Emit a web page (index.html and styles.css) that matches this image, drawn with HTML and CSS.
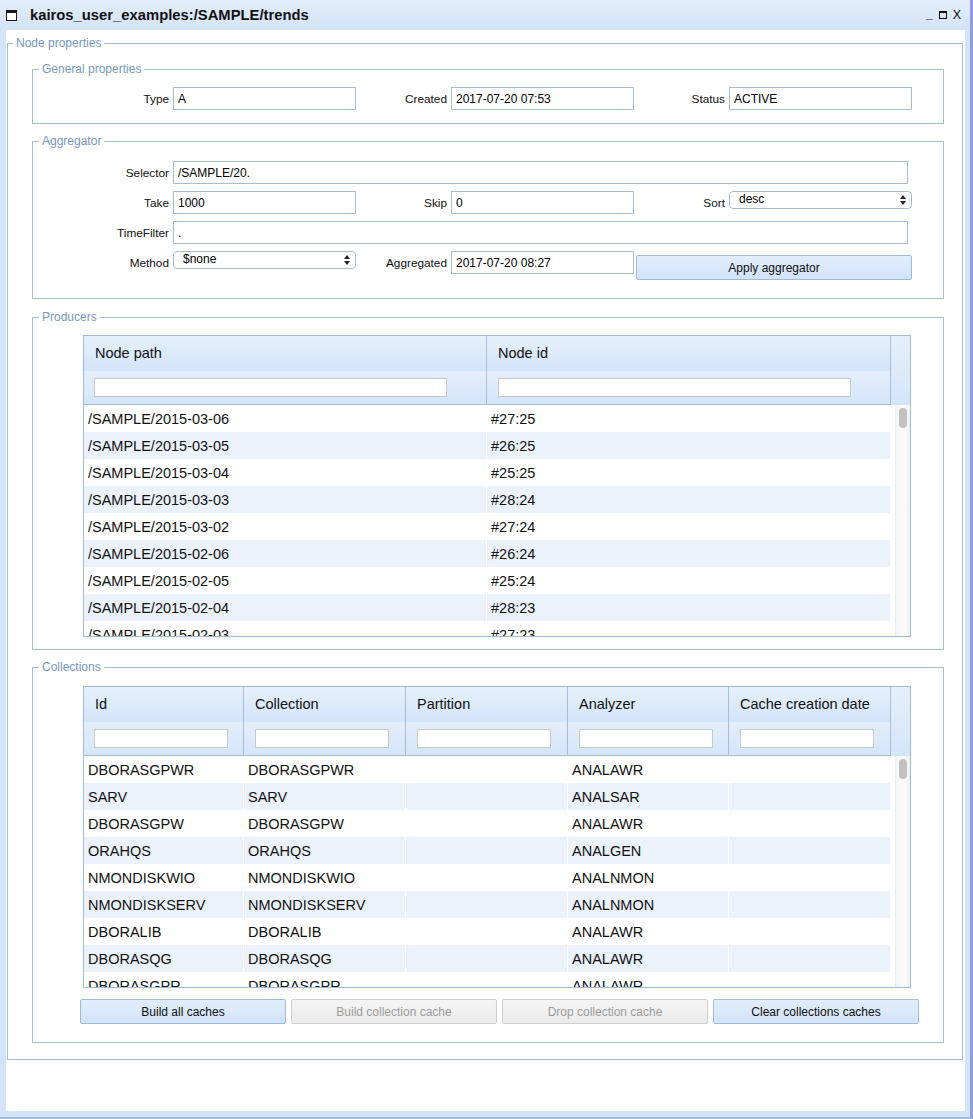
FILE: index.html
```html
<!DOCTYPE html>
<html>
<head>
<meta charset="utf-8">
<title>kairos_user_examples:/SAMPLE/trends</title>
<link rel="stylesheet" href="styles.css">
</head>
<body>
<div class="window">
  <div class="titlebar">
    <svg class="ticon" width="11" height="11" viewBox="0 0 11 11"><rect x="0.5" y="0.5" width="10" height="10" fill="#fff" stroke="#1a1a1a"/><rect x="0" y="0" width="11" height="3" fill="#1a1a1a"/></svg>
    <span class="title">kairos_user_examples:/SAMPLE/trends</span>
    <div class="controls">
      <span class="ctl-min">_</span>
      <span class="ctl-max"></span>
      <span class="ctl-close">X</span>
    </div>
  </div>
  <div class="client">
    <fieldset class="fs node">
      <legend>Node properties</legend>

      <fieldset class="fs sub general">
        <legend>General properties</legend>
        <div class="form general-form">
          <div class="lbl">Type</div><div class="inp">A</div>
          <div class="lbl">Created</div><div class="inp">2017-07-20 07:53</div>
          <div class="lbl">Status</div><div class="inp">ACTIVE</div>
        </div>
      </fieldset>

      <fieldset class="fs sub aggregator">
        <legend>Aggregator</legend>
        <div class="form agg-form">
          <div class="lbl">Selector</div><div class="inp wide">/SAMPLE/20.</div>
          <div class="lbl">Take</div><div class="inp">1000</div>
          <div class="lbl">Skip</div><div class="inp">0</div>
          <div class="lbl">Sort</div><div class="sel"><span>desc</span><svg width="6" height="10" viewBox="0 0 6 10"><path d="M3 0 L6 4 L0 4 Z M0 6 L6 6 L3 10 Z" fill="#222"/></svg></div>
          <div class="lbl">TimeFilter</div><div class="inp wide">.</div>
          <div class="lbl">Method</div><div class="sel"><span>$none</span><svg width="6" height="10" viewBox="0 0 6 10"><path d="M3 0 L6 4 L0 4 Z M0 6 L6 6 L3 10 Z" fill="#222"/></svg></div>
          <div class="lbl">Aggregated</div><div class="inp">2017-07-20 08:27</div>
          <div class="btn apply">Apply aggregator</div>
        </div>
      </fieldset>

      <fieldset class="fs sub producers">
        <legend>Producers</legend>
        <div class="table prod">
          <div class="thead">
            <div class="hrow">
              <div class="hcell">Node path</div>
              <div class="hcell">Node id</div>
            </div>
            <div class="frow">
              <div class="fcell"><div class="finp"></div></div>
              <div class="fcell"><div class="finp"></div></div>
            </div>
          </div>
          <div class="hscroll"></div>
          <div class="rows">
            <div class="row"><div class="cell">/SAMPLE/2015-03-06</div><div class="cell">#27:25</div></div>
            <div class="row alt"><div class="cell">/SAMPLE/2015-03-05</div><div class="cell">#26:25</div></div>
            <div class="row"><div class="cell">/SAMPLE/2015-03-04</div><div class="cell">#25:25</div></div>
            <div class="row alt"><div class="cell">/SAMPLE/2015-03-03</div><div class="cell">#28:24</div></div>
            <div class="row"><div class="cell">/SAMPLE/2015-03-02</div><div class="cell">#27:24</div></div>
            <div class="row alt"><div class="cell">/SAMPLE/2015-02-06</div><div class="cell">#26:24</div></div>
            <div class="row"><div class="cell">/SAMPLE/2015-02-05</div><div class="cell">#25:24</div></div>
            <div class="row alt"><div class="cell">/SAMPLE/2015-02-04</div><div class="cell">#28:23</div></div>
            <div class="row"><div class="cell">/SAMPLE/2015-02-03</div><div class="cell">#27:23</div></div>
          </div>
          <div class="vscroll"><div class="track"><div class="thumb"></div></div></div>
        </div>
      </fieldset>

      <fieldset class="fs sub collections">
        <legend>Collections</legend>
        <div class="table coll">
          <div class="thead">
            <div class="hrow">
              <div class="hcell">Id</div>
              <div class="hcell">Collection</div>
              <div class="hcell">Partition</div>
              <div class="hcell">Analyzer</div>
              <div class="hcell">Cache creation date</div>
            </div>
            <div class="frow">
              <div class="fcell"><div class="finp"></div></div>
              <div class="fcell"><div class="finp"></div></div>
              <div class="fcell"><div class="finp"></div></div>
              <div class="fcell"><div class="finp"></div></div>
              <div class="fcell"><div class="finp"></div></div>
            </div>
          </div>
          <div class="hscroll"></div>
          <div class="rows">
            <div class="row"><div class="cell">DBORASGPWR</div><div class="cell">DBORASGPWR</div><div class="cell"></div><div class="cell">ANALAWR</div><div class="cell"></div></div>
            <div class="row alt"><div class="cell">SARV</div><div class="cell">SARV</div><div class="cell"></div><div class="cell">ANALSAR</div><div class="cell"></div></div>
            <div class="row"><div class="cell">DBORASGPW</div><div class="cell">DBORASGPW</div><div class="cell"></div><div class="cell">ANALAWR</div><div class="cell"></div></div>
            <div class="row alt"><div class="cell">ORAHQS</div><div class="cell">ORAHQS</div><div class="cell"></div><div class="cell">ANALGEN</div><div class="cell"></div></div>
            <div class="row"><div class="cell">NMONDISKWIO</div><div class="cell">NMONDISKWIO</div><div class="cell"></div><div class="cell">ANALNMON</div><div class="cell"></div></div>
            <div class="row alt"><div class="cell">NMONDISKSERV</div><div class="cell">NMONDISKSERV</div><div class="cell"></div><div class="cell">ANALNMON</div><div class="cell"></div></div>
            <div class="row"><div class="cell">DBORALIB</div><div class="cell">DBORALIB</div><div class="cell"></div><div class="cell">ANALAWR</div><div class="cell"></div></div>
            <div class="row alt"><div class="cell">DBORASQG</div><div class="cell">DBORASQG</div><div class="cell"></div><div class="cell">ANALAWR</div><div class="cell"></div></div>
            <div class="row"><div class="cell">DBORASGPR</div><div class="cell">DBORASGPR</div><div class="cell"></div><div class="cell">ANALAWR</div><div class="cell"></div></div>
          </div>
          <div class="vscroll"><div class="track"><div class="thumb"></div></div></div>
        </div>
        <div class="btnrow">
          <div class="btn">Build all caches</div>
          <div class="btn disabled">Build collection cache</div>
          <div class="btn disabled">Drop collection cache</div>
          <div class="btn">Clear collections caches</div>
        </div>
      </fieldset>
    </fieldset>
  </div>
</div>
</body>
</html>
```

FILE: styles.css
```css
* { box-sizing: border-box; }
html, body { margin: 0; padding: 0; }
body {
  width: 973px;
  height: 1119px;
  overflow: hidden;
  background: #ffffff;
  font-family: "Liberation Sans", Arial, sans-serif;
  color: #000;
}

.window {
  width: 973px;
  height: 1119px;
  display: flex;
  flex-direction: column;
  background: #d4e4f8;
  padding: 0 0 6px 6px;
  border-right: 3px solid #8e9be0;
  border-bottom: 2px solid #a7bdd8;
}

.titlebar {
  height: 30px;
  flex: 0 0 30px;
  display: flex;
  align-items: center;
  margin-left: -6px;
  padding-left: 6px;
  background: linear-gradient(#e2edfb, #d3e3f7);
}
.ticon { display: block; margin-right: 13px; }
.title {
  font-weight: bold;
  font-size: 14.8px;
  color: #111;
}
.controls {
  margin-left: auto;
  margin-right: 9px;
  display: flex;
  align-items: center;
  gap: 6px;
  font-size: 12px;
  color: #111;
}
.ctl-min { font-weight: bold; line-height: 12px; margin-top: -2px; }
.ctl-max {
  width: 8px;
  height: 8px;
  border: 1px solid #111;
  border-top-width: 2px;
}
.ctl-close { font-size: 12.5px; }

.client {
  flex: 1;
  background: #ffffff;
  margin-right: 5px;
  display: flex;
  flex-direction: column;
  padding-top: 6px;
}

.fs {
  margin: 0;
  padding: 0;
  border: 1px solid #a5bfd6;
  min-width: 0;
}
.fs > legend {
  padding: 0 3px;
  font-size: 12px;
  line-height: 14px;
  color: #7798bf;
}

.node {
  margin-left: 1px;
  margin-right: 2px;
  padding-bottom: 16px;
}
.node > legend { margin-left: 5px; }

.sub {
  margin: 10px 18px 0 24px;
}
.sub > legend { margin-left: 6px; }
.general { margin-top: 12px; }
.producers { margin-top: 11px; padding-bottom: 12px; }
.collections { margin-top: 10px; padding-bottom: 18px; }

.form {
  display: grid;
  grid-template-columns: 87px 183px 87px 183px 87px 183px;
  column-gap: 4px;
  row-gap: 7px;
  padding-left: 49px;
  grid-auto-rows: 23px;
}
.general-form { padding-top: 11px; padding-bottom: 13px; }
.agg-form { padding-top: 13px; padding-bottom: 18px; grid-template-rows: 23px 23px 23px 29px; }

.lbl {
  text-align: right;
  font-size: 11.8px;
  height: 23px;
  line-height: 24px;
  white-space: nowrap;
  color: #111;
}
.inp {
  height: 23px;
  border: 1px solid #a6bccf;
  background: #fff;
  font-size: 12px;
  line-height: 22px;
  padding-left: 4px;
  white-space: nowrap;
  overflow: hidden;
}
.inp.wide {
  grid-column: 2 / 7;
  width: 735px;
}
.sel {
  height: 18px;
  border: 1px solid #a9bdd1;
  border-radius: 4px;
  background: #fff;
  font-size: 12px;
  display: flex;
  align-items: center;
  justify-content: space-between;
  padding: 0 5px 0 9px;
}
.sel span { line-height: 16px; margin-top: -2px; }
.sel svg { display: block; }

.btn {
  height: 25px;
  border: 1px solid #a1bad4;
  border-radius: 2px;
  background: linear-gradient(#e1edfc, #d2e3f8);
  font-size: 12px;
  line-height: 24px;
  text-align: center;
  color: #111;
  white-space: nowrap;
}
.btn.disabled {
  background: linear-gradient(#f5f5f5, #ebebeb);
  border-color: #cfcfcf;
  color: #9d9d9d;
}
.apply {
  grid-column: 5 / 7;
  margin-left: -2px;
  margin-top: 4px;
}

.table {
  margin-left: 50px;
  width: 828px;
  border: 1px solid #9fbcd7;
  display: grid;
  grid-template-columns: 807px 19px;
}
.prod { margin-top: 11px; }
.coll { margin-top: 12px; }

.thead { grid-column: 1; grid-row: 1; }
.hscroll {
  grid-column: 2;
  grid-row: 1;
  background: linear-gradient(#e5effc, #d4e5f9);
}
.hrow, .frow, .row {
  display: grid;
}
.prod .hrow, .prod .frow, .prod .row { grid-template-columns: 403px 404px; }
.coll .hrow, .coll .frow, .coll .row { grid-template-columns: 160px 162px 162px 161px 162px; }

.hrow { height: 35px; border-bottom: 1px solid #a3bfd9; }
.hcell {
  background: linear-gradient(#e6f0fc, #d3e5f9);
  border-right: 1px solid #a3bfd9;
  font-size: 14.5px;
  line-height: 35px;
  padding-left: 11px;
  white-space: nowrap;
  color: #111;
}
.frow { height: 34px; border-bottom: 1px solid #a3bfd9; }
.fcell {
  background: linear-gradient(#e4eefc, #d4e5f9);
  border-right: 1px solid #a3bfd9;
  display: flex;
  align-items: center;
  padding-left: 10px;
}
.fcell + .fcell { padding-left: 11px; }
.finp {
  height: 19px;
  background: #fff;
  border: 1px solid #c9c9c9;
}
.prod .finp { width: 353px; }
.coll .finp { width: 134px; }

.rows {
  grid-column: 1;
  grid-row: 2;
  height: 231px;
  overflow: hidden;
}
.row { height: 27px; }
.row.alt { background: #ebf2fc; }
.cell {
  font-size: 14.5px;
  line-height: 27px;
  padding-top: 1px;
  padding-left: 4px;
  white-space: nowrap;
  overflow: hidden;
  border-right: 1px solid transparent;
  color: #111;
}
.row.alt .cell { border-right-color: #ffffff; }

.vscroll {
  grid-column: 2;
  grid-row: 2;
  height: 231px;
  padding-left: 4px;
  background: #fff;
}
.track {
  height: 100%;
  border-left: 1px solid #ececec;
  background: linear-gradient(to right, #f6f6f6, #fbfbfb 60%, #f1f1f1);
  padding-top: 3px;
  padding-left: 3px;
}
.thumb {
  width: 8px;
  height: 20px;
  border-radius: 4px;
  background: #c1c1c1;
}

.btnrow {
  display: flex;
  gap: 5px;
  margin-top: 11px;
  padding-left: 47px;
}
.btnrow .btn { width: 206px; }
```
